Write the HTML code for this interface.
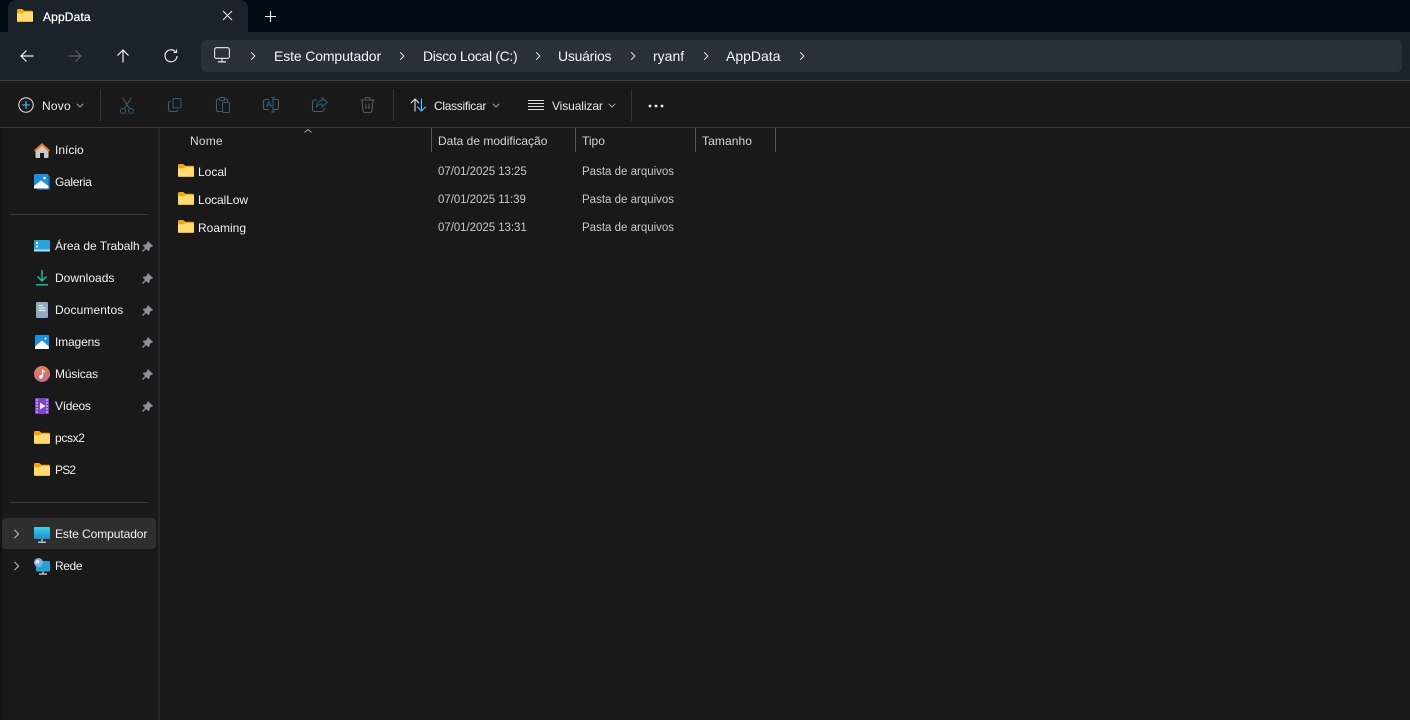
<!DOCTYPE html>
<html lang="pt-BR">
<head>
<meta charset="utf-8">
<title>AppData</title>
<style>
html,body{margin:0;padding:0;background:#191919}
body{width:1410px;height:720px;position:relative;overflow:hidden;font-family:"Liberation Sans",sans-serif;color:#f0f0f0}
.a{position:absolute}
.t{position:absolute;white-space:nowrap;line-height:16px;font-size:12px}
.b{font-size:14px;line-height:18px;color:#f2f4f5}
svg{position:absolute;overflow:visible}
.h{color:#d6d6d6}
.d{color:#c8c8c8;font-size:11.5px}
.v{position:absolute;top:128px;height:24px;width:1px;background:#565656}
</style>
</head>
<body>
<svg width="0" height="0" style="position:absolute">
<defs>
<symbol id="folder" viewBox="0 0 16 13">
<path d="M0 1.200C0 .5.5 0 1.200 0H4.800C5.300 0 5.600.2 5.900.5L7.200 1.800H14.800C15.500 1.800 16 2.300 16 3V7H0Z" fill="#eea90f"/>
<path d="M0 4.300H5.500L7.200 3H14.800C15.500 3 16 3.500 16 4.200V11.800C16 12.500 15.500 13 14.800 13H1.200C.5 13 0 12.500 0 11.800Z" fill="#ffdb70"/>
<path d="M0 12H16V12C16 12.600 15.500 13 14.800 13H1.200C.5 13 0 12.600 0 12Z" fill="#eeb53f"/>
</symbol>
<symbol id="pin" viewBox="0 0 12 12">
<path d="M6.500 0 12 5.500 10.800 6.500 10 6.200 8.300 8V10L7 11.200 4.500 8.700 1 12 0 11 3.300 7.500 .8 5 2 3.800H4L5.800 2 5.500 1.200Z" fill="#8a9096"/>
</symbol>
<symbol id="chev" viewBox="0 0 8 12">
<path d="M1.500 1 6.500 6 1.500 11" fill="none" stroke="currentColor" stroke-width="1.200"/>
</symbol>
<symbol id="down" viewBox="0 0 8 5">
<path d="M.8.8 4 4 7.200.8" fill="none" stroke="#a0a0a0" stroke-width="1"/>
</symbol>
</defs>
</svg>

<!-- title strip -->
<div class="a" style="left:0;top:0;width:1410px;height:32px;background:#020b13"></div>
<!-- nav bar -->
<div class="a" style="left:0;top:32px;width:1410px;height:48px;background:#1c2229"></div>
<div class="a" style="left:0;top:80px;width:1410px;height:1px;background:#3d3e3f"></div>
<!-- tab -->
<div class="a" style="left:8px;top:0;width:240px;height:32px;background:#1c2229;border-radius:8px 8px 0 0"></div>
<svg style="left:17px;top:9px" width="16" height="13"><use href="#folder"/></svg>
<div class="t" style="left:43px;top:9px;font-size:12px;color:#fff;letter-spacing:.15px;-webkit-text-stroke:.25px #fff">AppData</div>
<svg style="left:222px;top:10px" width="11" height="11" viewBox="0 0 11 11"><path d="M1 1 10 10M10 1 1 10" stroke="#e8e8e8" stroke-width="1.100" fill="none"/></svg>
<svg style="left:265px;top:11px" width="11" height="11" viewBox="0 0 11 11"><path d="M5.500 0V11M0 5.500H11" stroke="#f0f0f0" stroke-width="1.100" fill="none"/></svg>

<!-- nav arrows -->
<svg style="left:20px;top:49px" width="14" height="14" viewBox="0 0 14 14"><path d="M13.500 7H1M6.500 1.500 1 7 6.500 12.500" stroke="#f0f0f0" stroke-width="1.200" fill="none"/></svg>
<svg style="left:68px;top:49px" width="14" height="14" viewBox="0 0 14 14"><path d="M.5 7H13M7.500 1.500 13 7 7.500 12.500" stroke="#5d6165" stroke-width="1.200" fill="none"/></svg>
<svg style="left:116px;top:49px" width="14" height="14" viewBox="0 0 14 14"><path d="M7 13.500V1M1.500 6.500 7 1 12.500 6.500" stroke="#f0f0f0" stroke-width="1.200" fill="none"/></svg>
<svg style="left:164px;top:49px" width="14" height="14" viewBox="0 0 14 14"><path d="M11.500 2.800A6 6 0 1 0 13 7" stroke="#e8e8e8" stroke-width="1.200" fill="none"/><path d="M12.500.5V3.500H9.500" stroke="#e8e8e8" stroke-width="1.100" fill="none"/></svg>

<!-- address bar -->
<div class="a" style="left:201px;top:40px;width:1201px;height:32px;background:#2a3037;border-radius:5px"></div>
<svg style="left:214px;top:47px" width="16" height="16" viewBox="0 0 16 16"><rect x=".6" y=".6" width="14.800" height="10.800" rx="2" fill="none" stroke="#d8d8d8" stroke-width="1.200"/><path d="M8 11.500V14.500M4 14.800H12" stroke="#d8d8d8" stroke-width="1.300" fill="none"/></svg>
<svg style="left:250px;top:51px;color:#e8e8e8" width="6" height="10"><use href="#chev"/></svg>
<div class="t b" style="left:274px;top:47px;letter-spacing:-.13px">Este Computador</div>
<svg style="left:399px;top:51px;color:#e8e8e8" width="6" height="10"><use href="#chev"/></svg>
<div class="t b" style="left:423px;top:47px;letter-spacing:-.33px">Disco Local (C:)</div>
<svg style="left:535px;top:51px;color:#e8e8e8" width="6" height="10"><use href="#chev"/></svg>
<div class="t b" style="left:558px;top:47px;letter-spacing:-.25px">Usuários</div>
<svg style="left:630px;top:51px;color:#e8e8e8" width="6" height="10"><use href="#chev"/></svg>
<div class="t b" style="left:653px;top:47px">ryanf</div>
<svg style="left:703px;top:51px;color:#e8e8e8" width="6" height="10"><use href="#chev"/></svg>
<div class="t b" style="left:726px;top:47px">AppData</div>
<svg style="left:799px;top:51px;color:#e8e8e8" width="6" height="10"><use href="#chev"/></svg>

<!-- toolbar -->
<div class="a" style="left:0;top:127px;width:1410px;height:1px;background:#3a3a3a"></div>
<svg style="left:18px;top:97px" width="16" height="16" viewBox="0 0 16 16"><circle cx="8" cy="8" r="7.200" fill="none" stroke="#d8d8d8" stroke-width="1.100"/><path d="M8 4V12M4 8H12" stroke="#4cc2ff" stroke-width="1.100" fill="none"/></svg>
<div class="t" style="left:42px;top:98px;color:#eee;letter-spacing:.2px">Novo</div>
<svg style="left:76px;top:103px" width="8" height="5"><use href="#down"/></svg>
<div class="a" style="left:100px;top:89px;width:1px;height:32px;background:#333"></div>

<svg style="left:120px;top:97px" width="14" height="17" viewBox="0 0 14 17"><path d="M2.500 .5 9.500 11.500M11.500 .5 4.500 11.500" stroke="#55585a" stroke-width="1" fill="none"/><circle cx="3" cy="14" r="2.500" fill="none" stroke="#2c5a76" stroke-width="1.100"/><circle cx="11" cy="14" r="2.500" fill="none" stroke="#2c5a76" stroke-width="1.100"/></svg>
<svg style="left:168px;top:98px" width="14" height="14" viewBox="0 0 14 14"><rect x="5" y=".5" width="8" height="9.500" rx="1.500" fill="none" stroke="#2c5a76" stroke-width="1.100"/><path d="M3 3.500H2.200C1.300 3.500.5 4.300.5 5.200V11.500C.5 12.600 1.400 13.500 2.500 13.500H7.500C8.600 13.500 9.300 12.900 9.500 12" fill="none" stroke="#55585a" stroke-width="1.100"/></svg>
<svg style="left:216px;top:97px" width="14" height="16" viewBox="0 0 14 16"><path d="M6 14.500H2C1.200 14.500.5 13.800.5 13V3.500C.5 2.700 1.200 2 2 2H10C10.800 2 11.500 2.700 11.500 3.500V5" fill="none" stroke="#55585a" stroke-width="1.100"/><rect x="3.500" y=".5" width="5" height="3" rx="1" fill="#191919" stroke="#55585a"/><rect x="6.500" y="5.500" width="7" height="10" rx="1" fill="none" stroke="#2c5a76" stroke-width="1.100"/></svg>
<svg style="left:263px;top:97px" width="16" height="16" viewBox="0 0 16 16"><path d="M6 2.500H2C1.200 2.500.5 3.200.5 4V11C.5 11.800 1.200 12.500 2 12.500H6M10 2.500H14C14.800 2.500 15.500 3.200 15.500 4V11C15.500 11.800 14.800 12.500 14 12.500H10" fill="none" stroke="#55585a" stroke-width="1.100"/><path d="M3.500 10 6 4.500 8.500 10M4.500 8H7.500M8 .5H12M8 15H12M10 .5V15" fill="none" stroke="#2c5a76" stroke-width="1.100"/></svg>
<svg style="left:312px;top:97px" width="16" height="16" viewBox="0 0 16 16"><path d="M5 3H2.500C1.400 3 .5 3.900 .5 5V12.500C.5 13.600 1.400 14.500 2.500 14.500H10C11.100 14.500 12 13.600 12 12.500V11" fill="none" stroke="#55585a" stroke-width="1.100"/><path d="M10 .8 15.300 5.300 10 9.800V7C7.500 7 5.700 8 4.500 10.500 4.500 6.500 6.500 3.800 10 3.500Z" fill="none" stroke="#2c5a76" stroke-width="1.100"/></svg>
<svg style="left:360px;top:97px" width="15" height="16" viewBox="0 0 15 16"><path d="M.5 3H14.500M5 3V2C5 1.200 5.700.5 6.500.5H8.500C9.300.5 10 1.200 10 2V3M2 3 3 13.500C3.100 14.600 3.900 15.500 5 15.500H10C11.100 15.500 11.900 14.600 12 13.500L13 3M6 6.500V12M9 6.500V12" fill="none" stroke="#55585a" stroke-width="1.100"/></svg>

<div class="a" style="left:393px;top:89px;width:1px;height:32px;background:#333"></div>
<svg style="left:410px;top:98px" width="17" height="14" viewBox="0 0 17 14"><path d="M5 13.500V1M.8 5.200 5 1 9.200 5.200" fill="none" stroke="#e0e0e0" stroke-width="1.100"/><path d="M11.500.5V13M7.300 8.800 11.500 13 15.700 8.800" fill="none" stroke="#4cc2ff" stroke-width="1.100"/></svg>
<div class="t" style="left:434px;top:98px;color:#e8e8e8;letter-spacing:-.3px">Classificar</div>
<svg style="left:492px;top:103px" width="8" height="5"><use href="#down"/></svg>
<svg style="left:528px;top:100px" width="16" height="11" viewBox="0 0 16 11"><path d="M0 .5H16M0 3.500H16M0 6.500H16M0 9.500H16" stroke="#dcdcdc" stroke-width="1" fill="none"/></svg>
<div class="t" style="left:552px;top:98px;color:#e8e8e8;letter-spacing:-.1px">Visualizar</div>
<svg style="left:608px;top:103px" width="8" height="5"><use href="#down"/></svg>
<div class="a" style="left:631px;top:89px;width:1px;height:32px;background:#333"></div>
<svg style="left:648px;top:104px" width="16" height="4" viewBox="0 0 16 4"><circle cx="2" cy="2" r="1.400" fill="#f0f0f0"/><circle cx="8" cy="2" r="1.400" fill="#f0f0f0"/><circle cx="14" cy="2" r="1.400" fill="#f0f0f0"/></svg>

<!-- sidebar divider -->
<div class="a" style="left:158px;top:128px;width:2px;height:592px;background:#262626"></div>
<div class="a" style="left:0;top:128px;width:2px;height:592px;background:#131313"></div>

<!-- sidebar: quick access -->
<svg style="left:34px;top:143px" width="16" height="15" viewBox="0 0 16 15"><path d="M1.500 6.500 8 1.500 14.500 6.500V14C14.500 14.500 14 15 13.500 15H10V10H6V15H2.500C2 15 1.500 14.500 1.500 14Z" fill="#c9c9c9"/><path d="M8 0 16 7.300 14.800 8.800 8 2.800 1.200 8.800 0 7.300Z" fill="#e8762c"/></svg>
<div class="t" style="left:55px;top:142px">Início</div>
<svg style="left:34px;top:174px" width="16" height="16" viewBox="0 0 16 16"><path d="M14 2H16V15C16 15.600 15.600 16 15 16H3V14H14Z" fill="#155a9e"/><rect width="14.500" height="14.500" rx="1" fill="#1d8fe0"/><path d="M0 14.500V12L7 6.500 14.500 12V14.500Z" fill="#fff"/><circle cx="10.500" cy="4" r="1.300" fill="#fff"/></svg>
<div class="t" style="left:55px;top:174px;letter-spacing:-.3px">Galeria</div>

<div class="a" style="left:10px;top:214px;width:138px;height:1px;background:#3a3a3a"></div>

<svg style="left:34px;top:240px" width="16" height="12" viewBox="0 0 16 12"><rect width="16" height="11.500" rx="1" fill="#25a4d8"/><rect y="9.500" width="16" height="2" fill="#a5e2f5"/><rect x="2" y="2" width="2" height="2" fill="#fff"/><rect x="2" y="5.500" width="2" height="2" fill="#d9f3fb"/></svg>
<div class="t" style="left:55px;top:238px;width:85px;overflow:hidden;letter-spacing:-.05px">Área de Trabalho</div>
<svg style="left:142px;top:241px" width="11" height="11"><use href="#pin"/></svg>

<svg style="left:36px;top:270px" width="12" height="16" viewBox="0 0 12 16"><path d="M6 0V11M1.500 6.500 6 11 10.500 6.500" fill="none" stroke="#25b78d" stroke-width="1.500"/><path d="M0 14.800H12" stroke="#25b78d" stroke-width="1.500"/></svg>
<div class="t" style="left:55px;top:270px">Downloads</div>
<svg style="left:142px;top:273px" width="11" height="11"><use href="#pin"/></svg>

<svg style="left:36px;top:302px" width="12" height="16" viewBox="0 0 12 16"><rect width="12" height="16" rx="1" fill="#8fa9c4"/><path d="M2.500 3.500H7M2.500 6H9.500M2.500 8.500H9.500" stroke="#fff" stroke-width="1.100"/></svg>
<div class="t" style="left:55px;top:302px;letter-spacing:.1px">Documentos</div>
<svg style="left:142px;top:305px" width="11" height="11"><use href="#pin"/></svg>

<svg style="left:35px;top:335px" width="14" height="14" viewBox="0 0 14 14"><rect width="14" height="14" rx="1" fill="#1d8fe0"/><path d="M0 14V11.500L7 5.500 14 11.500V14Z" fill="#fff"/><circle cx="10.500" cy="3.500" r="1" fill="#fff"/></svg>
<div class="t" style="left:55px;top:334px;letter-spacing:-.15px">Imagens</div>
<svg style="left:142px;top:337px" width="11" height="11"><use href="#pin"/></svg>

<svg style="left:34px;top:366px" width="16" height="16" viewBox="0 0 16 16"><defs><linearGradient id="mg" x1="0" y1="0" x2="0" y2="1"><stop offset="0" stop-color="#e28253"/><stop offset="1" stop-color="#c56a8c"/></linearGradient></defs><circle cx="8" cy="8" r="8" fill="url(#mg)"/><path d="M8.500 3.500V10.500" stroke="#fff" stroke-width="1.300"/><circle cx="7" cy="10.800" r="1.800" fill="#fff"/><path d="M8.500 3.500C9 5 10.500 5 10.800 6.200" stroke="#fff" stroke-width="1" fill="none"/></svg>
<div class="t" style="left:55px;top:366px;letter-spacing:-.15px">Músicas</div>
<svg style="left:142px;top:369px" width="11" height="11"><use href="#pin"/></svg>

<svg style="left:35px;top:398px" width="14" height="16" viewBox="0 0 14 16"><rect width="14" height="16" rx="1" fill="#7b45c8"/><path d="M5 4.500 10.500 8 5 11.500Z" fill="#f2e9ff"/><path d="M1 2H3M1 5H3M1 8H3M1 11H3M1 14H3M11 2H13M11 5H13M11 8H13M11 11H13M11 14H13" stroke="#d4bdf5" stroke-width="1.200"/></svg>
<div class="t" style="left:55px;top:398px;letter-spacing:-.3px">Vídeos</div>
<svg style="left:142px;top:401px" width="11" height="11"><use href="#pin"/></svg>

<svg style="left:34px;top:431px" width="16" height="13"><use href="#folder"/></svg>
<div class="t" style="left:55px;top:430px;letter-spacing:-.35px">pcsx2</div>
<svg style="left:34px;top:463px" width="16" height="13"><use href="#folder"/></svg>
<div class="t" style="left:55px;top:462px;letter-spacing:-.8px">PS2</div>

<div class="a" style="left:10px;top:502px;width:138px;height:1px;background:#3a3a3a"></div>

<div class="a" style="left:2px;top:518px;width:154px;height:31px;background:#2e2e2e;border-radius:4px"></div>
<svg style="left:13px;top:529px;color:#c8c8c8" width="7" height="10"><use href="#chev"/></svg>
<svg style="left:34px;top:527px" width="16" height="16" viewBox="0 0 16 16"><defs><linearGradient id="sc" x1="0" y1="0" x2="0" y2="1"><stop offset="0" stop-color="#3ed0ee"/><stop offset="1" stop-color="#1f8fc7"/></linearGradient></defs><rect width="16" height="12" rx="1" fill="url(#sc)"/><rect x="7" y="12" width="2" height="3" fill="#8fa0a8"/><rect x="4" y="14.500" width="8" height="1.500" fill="#b5c0c5"/></svg>
<div class="t" style="left:55px;top:526px;letter-spacing:-.07px">Este Computador</div>

<svg style="left:13px;top:561px;color:#c8c8c8" width="7" height="10"><use href="#chev"/></svg>
<svg style="left:34px;top:558px" width="16" height="17" viewBox="0 0 16 17"><rect x="2" y="3" width="14" height="10.500" rx="1" fill="#22a3d6"/><rect x="8" y="13.500" width="2" height="2" fill="#8fa0a8"/><rect x="5" y="15.300" width="8" height="1.500" fill="#b5c0c5"/><circle cx="4.500" cy="4.500" r="4.500" fill="#7fb2d6"/><path d="M2 2.500C3.500 1.500 5 2 5.500 3.500 5 5.500 3 6 1.500 5.500Z" fill="#dcecf6"/></svg>
<div class="t" style="left:55px;top:558px;letter-spacing:-.4px">Rede</div>

<!-- column headers -->
<svg style="left:304px;top:129px" width="8" height="4" viewBox="0 0 8 4"><path d="M.5 3.500 4 .5 7.500 3.500" fill="none" stroke="#a8a8a8"/></svg>
<div class="t h" style="left:190px;top:133px;letter-spacing:.2px">Nome</div>
<div class="v" style="left:431px"></div>
<div class="t h" style="left:438px;top:133px">Data de modificação</div>
<div class="v" style="left:575px"></div>
<div class="t h" style="left:582px;top:133px">Tipo</div>
<div class="v" style="left:695px"></div>
<div class="t h" style="left:702px;top:133px;letter-spacing:.1px">Tamanho</div>
<div class="v" style="left:775px"></div>

<!-- rows -->
<svg style="left:178px;top:164px" width="16" height="13"><use href="#folder"/></svg>
<div class="t" style="left:198px;top:164px">Local</div>
<div class="t d" style="left:438px;top:164px;letter-spacing:-.05px">07/01/2025 13:25</div>
<div class="t d" style="left:582px;top:164px">Pasta de arquivos</div>

<svg style="left:178px;top:192px" width="16" height="13"><use href="#folder"/></svg>
<div class="t" style="left:198px;top:192px;letter-spacing:-.1px">LocalLow</div>
<div class="t d" style="left:438px;top:192px;letter-spacing:-.05px">07/01/2025 11:39</div>
<div class="t d" style="left:582px;top:192px">Pasta de arquivos</div>

<svg style="left:178px;top:220px" width="16" height="13"><use href="#folder"/></svg>
<div class="t" style="left:198px;top:220px">Roaming</div>
<div class="t d" style="left:438px;top:220px;letter-spacing:-.05px">07/01/2025 13:31</div>
<div class="t d" style="left:582px;top:220px">Pasta de arquivos</div>
</body>
</html>
